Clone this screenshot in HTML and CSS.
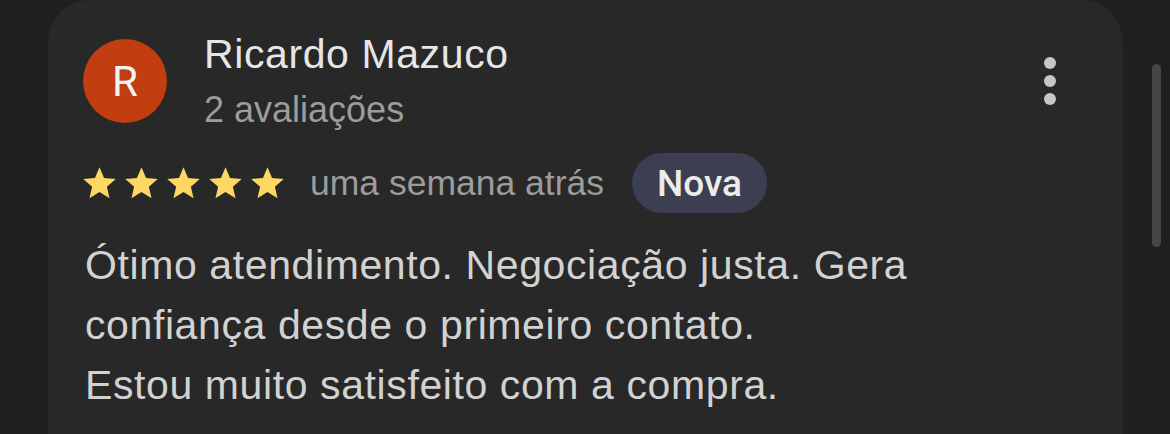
FILE: index.html
```html
<!DOCTYPE html>
<html lang="pt-BR">
<head>
<meta charset="utf-8">
<link rel="stylesheet" href="styles.css">
</head>
<body>
<div class="page">
  <div class="card">
    <div class="header">
      <div class="avatar">R</div>
      <div class="who">
        <div class="name">Ricardo Mazuco</div>
        <div class="count">2 avaliações</div>
      </div>
      <div class="menu">
        <svg width="14" height="50" viewBox="0 0 14 50"><circle cx="7" cy="7" r="6" fill="#c6c6c6"/><circle cx="7" cy="25" r="6" fill="#c6c6c6"/><circle cx="7" cy="43" r="6" fill="#c6c6c6"/></svg>
      </div>
    </div>
    <div class="meta">
      <div class="stars">
        <svg class="star" viewBox="0 0 24 24"><path d="M12 17.27L18.18 21l-1.64-7.03L22 9.24l-7.19-.61L12 2 9.19 8.63 2 9.24l5.46 4.730L5.82 21z"/></svg>
        <svg class="star" viewBox="0 0 24 24"><path d="M12 17.27L18.18 21l-1.64-7.03L22 9.24l-7.19-.61L12 2 9.19 8.63 2 9.24l5.46 4.73L5.82 21z"/></svg>
        <svg class="star" viewBox="0 0 24 24"><path d="M12 17.27L18.18 21l-1.64-7.03L22 9.24l-7.19-.61L12 2 9.19 8.63 2 9.24l5.46 4.73L5.82 21z"/></svg>
        <svg class="star" viewBox="0 0 24 24"><path d="M12 17.27L18.18 21l-1.64-7.03L22 9.24l-7.19-.61L12 2 9.19 8.63 2 9.24l5.46 4.73L5.82 21z"/></svg>
        <svg class="star" viewBox="0 0 24 24"><path d="M12 17.27L18.18 21l-1.64-7.03L22 9.24l-7.19-.61L12 2 9.19 8.63 2 9.24l5.46 4.73L5.82 21z"/></svg>
      </div>
      <span class="when">uma semana atrás</span>
      <span class="badge">Nova</span>
    </div>
    <div class="text">Ótimo atendimento. Negociação justa. Gera<br>confiança desde o primeiro contato.<br>Estou muito satisfeito com a compra.</div>
  </div>
  <div class="scrollbar"></div>
</div>
</body>
</html>
```

FILE: styles.css
```css
html, body {
  margin: 0;
  padding: 0;
  background: #1f1f1f;
}
body {
  font-family: "Liberation Sans", Arial, sans-serif;
  width: 1170px;
  height: 434px;
  overflow: hidden;
}
.page {
  position: relative;
  height: 434px;
  padding-left: 48px;
}
.card {
  width: 1075px;
  height: 434px;
  box-sizing: border-box;
  background: #282828;
  border-radius: 42px 42px 0 0;
  padding: 30px 0 0 35px;
}
.header {
  display: flex;
  align-items: flex-start;
}
.avatar {
  margin-top: 9px;
  width: 84px;
  height: 84px;
  border-radius: 50%;
  background: #c23d10;
  color: #f4f4f4;
  font-family: Roboto, "Liberation Sans", sans-serif;
  font-size: 42px;
  display: flex;
  align-items: center;
  justify-content: center;
  flex-shrink: 0;
}
.who {
  margin-left: 37px;
  flex: 1;
}
.name {
  color: #e6e6e6;
  font-size: 41px;
  line-height: 48px;
  letter-spacing: 0.6px;
}
.count {
  color: #9c9c9c;
  font-size: 36px;
  line-height: 44px;
  margin-top: 10px;
}
.menu {
  margin-right: 66px;
  margin-top: 26px;
  display: flex;
}
.meta {
  display: flex;
  align-items: center;
  margin-top: 21px;
  height: 60px;
}
.stars {
  display: flex;
  gap: 3px;
  margin-left: -3px;
}
.star {
  width: 39px;
  height: 39px;
  fill: #fdd663;
}
.when {
  color: #9c9c9c;
  font-size: 35.5px;
  margin-left: 23px;
}
.badge {
  margin-left: 28px;
  height: 60px;
  padding: 0 25px;
  border-radius: 30px;
  background: #3b3f51;
  color: #ececec;
  font-family: Roboto, "Liberation Sans", sans-serif;
  font-size: 37px;
  font-weight: 500;
  display: flex;
  align-items: center;
}
.text {
  margin-top: 22px;
  margin-left: 2px;
  color: #d2d2d2;
  font-size: 41px;
  line-height: 60px;
  letter-spacing: 0.6px;
}
.scrollbar {
  position: absolute;
  left: 1152px;
  top: 64px;
  width: 9px;
  height: 183px;
  border-radius: 5px;
  background: #454545;
}
```
